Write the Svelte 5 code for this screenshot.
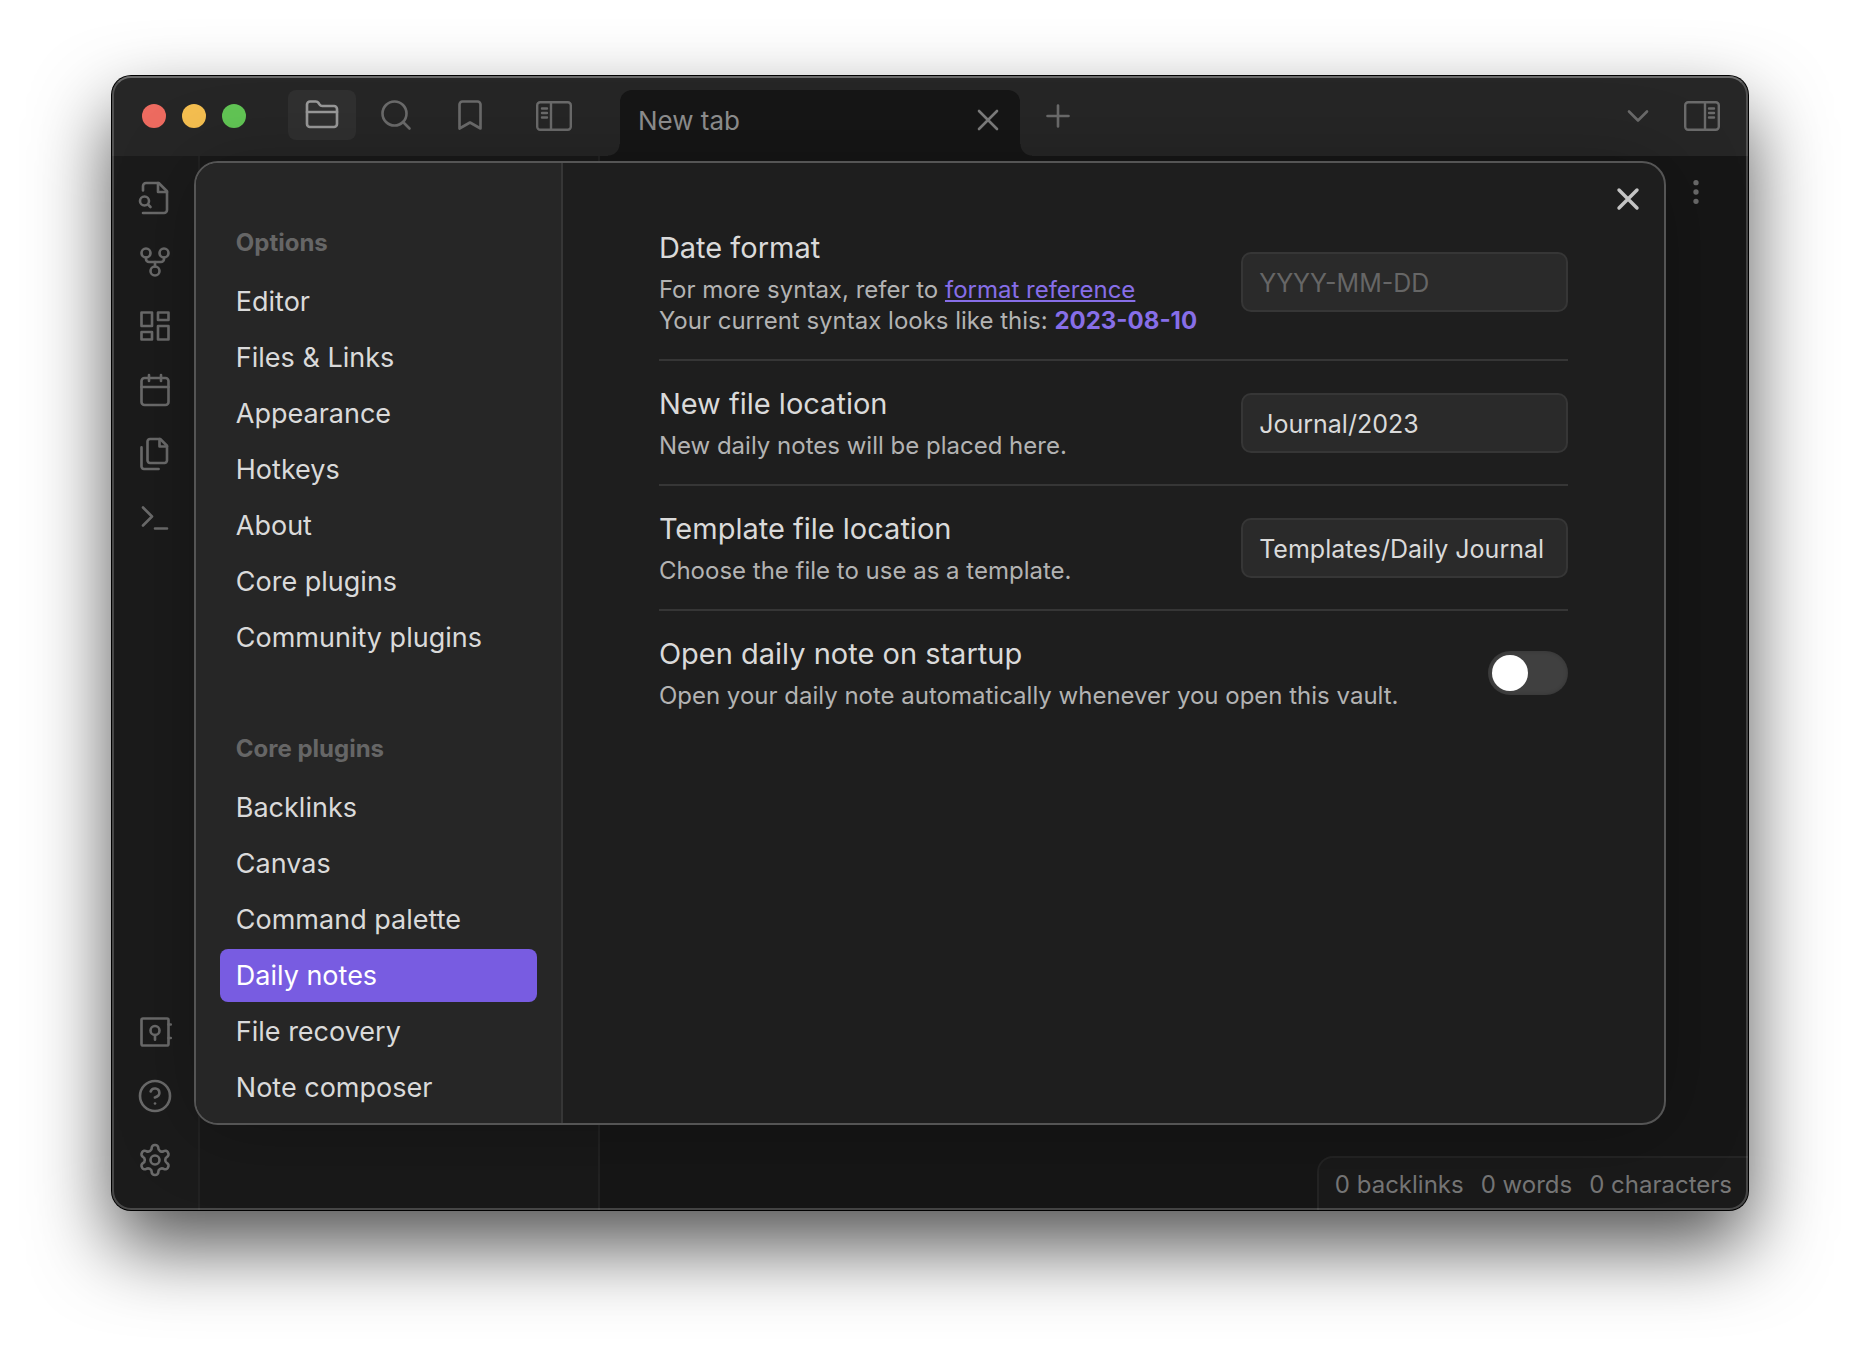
<script>
  // Settings modal on top of the dimmed note app window
  const ICONS = {
    folder: '<path d="M4 20h16a2 2 0 0 0 2-2V8a2 2 0 0 0-2-2h-7.93a2 2 0 0 1-1.66-.9l-.82-1.2A2 2 0 0 0 7.93 3H4a2 2 0 0 0-2 2v13c0 1.1.9 2 2 2Z"/><path d="M2 10h20"/>',
    search: '<circle cx="11" cy="11" r="8"/><path d="m21 21-4.3-4.3"/>',
    bookmark: '<path d="m19 21-7-4-7 4V5a2 2 0 0 1 2-2h10a2 2 0 0 1 2 2v16z"/>',
    switcher: '<path d="M4 22h14a2 2 0 0 0 2-2V7.5L14.5 2H6a2 2 0 0 0-2 2v3"/><path d="M14 2v6h6"/><circle cx="5" cy="14" r="3"/><path d="m9 18-1.5-1.5"/>',
    graph: '<circle cx="12" cy="18" r="3"/><circle cx="6" cy="6" r="3"/><circle cx="18" cy="6" r="3"/><path d="M18 9v1a2 2 0 0 1-2 2H8a2 2 0 0 1-2-2V9"/><path d="M12 12v3"/>',
    canvas: '<path d="M3 3h7v9H3zM14 3h7v5h-7zM14 12h7v9h-7zM3 16h7v5H3z"/>',
    calendar: '<rect x="3" y="4" width="18" height="18" rx="2"/><path d="M16 2v4M8 2v4M3 10h18"/>',
    files: '<path d="M15.5 2H8.6c-.4 0-.8.2-1.1.5-.3.3-.5.7-.5 1.1v12.8c0 .4.2.8.5 1.1.3.3.7.5 1.1.5h9.8c.4 0 .8-.2 1.1-.5.3-.3.5-.7.5-1.1V6.5L15.5 2z"/><path d="M3 7.6v12.8c0 .4.2.8.5 1.1.3.3.7.5 1.1.5h9.8"/><path d="M15 2v5h5"/>',
    terminal: '<path d="m4 17 6-6-6-6M12 19h8"/>',
    vault: '<rect x="3" y="3" width="18" height="18" rx="1"/><circle cx="12" cy="11" r="3"/><path d="M12 14v3.2M21 7h1.5M21 16h1.5"/>',
    help: '<circle cx="12" cy="12" r="10"/><path d="M9.09 9a3 3 0 0 1 5.83 1c0 2-3 3-3 3"/><path d="M12 17h.01"/>',
    gear: '<path d="M12.22 2h-.44a2 2 0 0 0-2 2v.18a2 2 0 0 1-1 1.73l-.43.25a2 2 0 0 1-2 0l-.15-.08a2 2 0 0 0-2.73.73l-.22.38a2 2 0 0 0 .73 2.73l.15.1a2 2 0 0 1 1 1.72v.51a2 2 0 0 1-1 1.74l-.15.09a2 2 0 0 0-.73 2.73l.22.38a2 2 0 0 0 2.73.73l.15-.08a2 2 0 0 1 2 0l.43.25a2 2 0 0 1 1 1.73V20a2 2 0 0 0 2 2h.44a2 2 0 0 0 2-2v-.18a2 2 0 0 1 1-1.73l.43-.25a2 2 0 0 1 2 0l.15.08a2 2 0 0 0 2.73-.73l.22-.39a2 2 0 0 0-.73-2.73l-.15-.08a2 2 0 0 1-1-1.74v-.5a2 2 0 0 1 1-1.74l.15-.09a2 2 0 0 0 .73-2.73l-.22-.38a2 2 0 0 0-2.73-.73l-.15.08a2 2 0 0 1-2 0l-.43-.25a2 2 0 0 1-1-1.73V4a2 2 0 0 0-2-2z"/><circle cx="12" cy="12" r="3"/>',
    cross: '<path d="m6 6 12 12M18 6 6 18"/>',
    plus: '<path d="M12 5v14M5 12h14"/>',
    chevron: '<path d="m6 9 6 6 6-6"/>',
    dots: '<circle cx="12" cy="5" r="1"/><circle cx="12" cy="12" r="1"/><circle cx="12" cy="19" r="1"/>'
  };

  const PANES = [
    { icon: 'folder', label: 'Files' },
    { icon: 'search', label: 'Search' },
    { icon: 'bookmark', label: 'Bookmarks' }
  ];

  const RIBBON_TOP = [
    { icon: 'switcher', label: 'Open quick switcher' },
    { icon: 'graph', label: 'Open graph view' },
    { icon: 'canvas', label: 'Create new canvas' },
    { icon: 'calendar', label: "Open today's daily note" },
    { icon: 'files', label: 'Insert template' },
    { icon: 'terminal', label: 'Open command palette' }
  ];
  const RIBBON_BOTTOM = [
    { icon: 'vault', label: 'Open another vault' },
    { icon: 'help', label: 'Help' },
    { icon: 'gear', label: 'Settings' }
  ];

  const GROUPS = [
    {
      title: 'Options',
      items: ['Editor', 'Files & Links', 'Appearance', 'Hotkeys', 'About', 'Core plugins', 'Community plugins']
    },
    {
      title: 'Core plugins',
      items: ['Backlinks', 'Canvas', 'Command palette', 'Daily notes', 'File recovery', 'Note composer']
    }
  ];

  let pane = $state('folder');
  let active = $state('Daily notes');
  let dateFormat = $state('');
  let folder = $state('Journal/2023');
  let template = $state('Templates/Daily Journal');
  let openOnStartup = $state(false);
</script>

{#snippet icon(name)}
  <svg class="icon" viewBox="0 0 24 24" aria-hidden="true">{@html ICONS[name]}</svg>
{/snippet}

{#snippet ribbonButtons(list)}
  <div class="ribbon-group">
    {#each list as item}
      <button class="icon-btn" aria-label={item.label}>{@render icon(item.icon)}</button>
    {/each}
  </div>
{/snippet}

<div class="desktop">
  <div class="window">
    <header class="titlebar">
      <div class="titlebar-left">
        <div class="lights">
          <span class="light red"></span>
          <span class="light yellow"></span>
          <span class="light green"></span>
        </div>
        <div class="panes">
          {#each PANES as p}
            <button
              class="pane-btn"
              class:active={pane === p.icon}
              aria-label={p.label}
              onclick={() => (pane = p.icon)}
            >{@render icon(p.icon)}</button>
          {/each}
        </div>
        <button class="icon-btn" aria-label="Collapse left sidebar">
          <svg class="panel-icon" viewBox="0 0 36 30" aria-hidden="true">
            <rect x="1.2" y="1.2" width="33.6" height="27.6" rx="3" />
            <path d="M15 1v28M6 7.5h5M6 12h5M6 16.5h5" />
          </svg>
        </button>
      </div>

      <div class="tab">
        <span>New tab</span>
        <button class="icon-btn tab-close" aria-label="Close tab">{@render icon('cross')}</button>
      </div>
      <button class="icon-btn" aria-label="Open new tab">{@render icon('plus')}</button>

      <div class="titlebar-right">
        <button class="icon-btn" aria-label="Tab list">{@render icon('chevron')}</button>
        <button class="icon-btn" aria-label="Expand right sidebar">
          <svg class="panel-icon" viewBox="0 0 36 30" aria-hidden="true">
            <rect x="1.2" y="1.2" width="33.6" height="27.6" rx="3" />
            <path d="M21 1v28M25 7.5h5M25 12h5M25 16.5h5" />
          </svg>
        </button>
      </div>
    </header>

    <div class="workspace">
      <nav class="ribbon">
        {@render ribbonButtons(RIBBON_TOP)}
        {@render ribbonButtons(RIBBON_BOTTOM)}
      </nav>
      <aside class="explorer"></aside>
      <main class="leaf">
        <button class="icon-btn more" aria-label="More options">{@render icon('dots')}</button>
        <footer class="status">
          <span>0 backlinks</span>
          <span>0 words</span>
          <span>0 characters</span>
        </footer>
      </main>
    </div>

    <div class="modal-container">
      <div class="modal" role="dialog" aria-modal="true" aria-label="Settings">
        <nav class="modal-nav">
          {#each GROUPS as group}
            <section class="nav-group">
              <h2>{group.title}</h2>
              {#each group.items as item}
                <button
                  class="nav-item"
                  class:active={active === item}
                  onclick={() => (active = item)}
                >{item}</button>
              {/each}
            </section>
          {/each}
        </nav>

        <div class="modal-content">
          <div class="setting">
            <div class="info">
              <label class="name" for="date-format">Date format</label>
              <div class="desc">
                For more syntax, refer to <a href="#format">format reference</a><br />
                Your current syntax looks like this: <b>2023-08-10</b>
              </div>
            </div>
            <input id="date-format" class="text" type="text" placeholder="YYYY-MM-DD" bind:value={dateFormat} />
          </div>

          <div class="setting">
            <div class="info">
              <label class="name" for="folder">New file location</label>
              <div class="desc">New daily notes will be placed here.</div>
            </div>
            <input id="folder" class="text" type="text" spellcheck="false" bind:value={folder} />
          </div>

          <div class="setting">
            <div class="info">
              <label class="name" for="template">Template file location</label>
              <div class="desc">Choose the file to use as a template.</div>
            </div>
            <input id="template" class="text" type="text" spellcheck="false" bind:value={template} />
          </div>

          <div class="setting">
            <div class="info">
              <label class="name" for="startup">Open daily note on startup</label>
              <div class="desc">Open your daily note automatically whenever you open this vault.</div>
            </div>
            <input id="startup" class="toggle" type="checkbox" bind:checked={openOnStartup} />
          </div>
        </div>

        <button class="icon-btn modal-close" aria-label="Close">{@render icon('cross')}</button>
      </div>
    </div>
  </div>
</div>

<style>
  :global(body) {
    margin: 0;
    background: #fff;
  }
  .desktop {
    box-sizing: border-box;
    display: flex;
    min-height: 100vh;
    padding: 76px 112px 148px;
    overflow: hidden;
    font-family: Inter, 'Liberation Sans', sans-serif;
    font-size: 27px;
    color: #dadada;
  }
  button,
  input {
    font: inherit;
    color: inherit;
  }
  button {
    padding: 0;
    border: 0;
    background: none;
    cursor: pointer;
  }

  .window {
    position: relative;
    flex: 1;
    display: flex;
    flex-direction: column;
    border-radius: 19px;
    background: #161616;
    box-shadow:
      0 0 0 1px #000,
      0 36px 78px rgba(0, 0, 0, 0.68);
  }
  /* light rim around the window, brighter on top */
  .window::after {
    content: '';
    position: absolute;
    inset: 0;
    border: 2px solid rgba(255, 255, 255, 0.2);
    border-top-color: rgba(255, 255, 255, 0.32);
    border-radius: 19px;
    pointer-events: none;
  }

  .icon {
    display: block;
    width: 36px;
    height: 36px;
    fill: none;
    stroke: currentColor;
    stroke-width: 1.75;
    stroke-linecap: round;
    stroke-linejoin: round;
  }
  .panel-icon {
    display: block;
    width: 36px;
    height: 30px;
    fill: none;
    stroke: currentColor;
    stroke-width: 2.4;
    stroke-linecap: round;
  }
  .icon-btn {
    flex: none;
    display: flex;
    align-items: center;
    justify-content: center;
    width: 36px;
    height: 36px;
    color: #6b6b6b;
  }

  /* title bar */
  .titlebar {
    display: flex;
    align-items: center;
    height: 80px;
    border-radius: 19px 19px 0 0;
    background: #262626;
  }
  .titlebar-left {
    box-sizing: border-box;
    flex: none;
    display: flex;
    align-items: center;
    justify-content: space-between;
    width: 508px;
    padding: 0 48px 0 30px;
  }
  .lights {
    display: flex;
    gap: 16px;
  }
  .light {
    width: 24px;
    height: 24px;
    border-radius: 50%;
  }
  .red {
    background: #ed6b60;
  }
  .yellow {
    background: #f5bf50;
  }
  .green {
    background: #62c655;
  }
  .panes {
    display: flex;
    gap: 6px;
    margin-left: 10px;
    padding-bottom: 2px;
  }
  .pane-btn {
    display: flex;
    align-items: center;
    justify-content: center;
    width: 68px;
    height: 50px;
    border-radius: 8px;
    color: #6b6b6b;
  }
  .pane-btn.active {
    background: #303030;
    color: #999;
  }
  .tab {
    position: relative;
    box-sizing: border-box;
    display: flex;
    align-items: center;
    justify-content: space-between;
    align-self: flex-end;
    width: 400px;
    height: 66px;
    margin-right: 20px;
    padding: 0 14px 6px 18px;
    border-radius: 12px 12px 0 0;
    background: #161616;
    font-size: 26px;
    color: #8f8f8f;
  }
  .tab::before,
  .tab::after {
    content: '';
    position: absolute;
    bottom: 0;
    width: 12px;
    height: 12px;
  }
  .tab::before {
    right: 100%;
    background: radial-gradient(circle at 0 0, transparent 11px, #161616 12px);
  }
  .tab::after {
    left: 100%;
    background: radial-gradient(circle at 100% 0, transparent 11px, #161616 12px);
  }
  .tab-close {
    color: #7d7d7d;
  }
  .titlebar-right {
    display: flex;
    gap: 28px;
    margin-left: auto;
    padding-right: 28px;
  }

  /* workspace behind the modal */
  .workspace {
    flex: 1;
    display: flex;
  }
  .ribbon {
    box-sizing: border-box;
    flex: none;
    display: flex;
    flex-direction: column;
    justify-content: space-between;
    align-items: center;
    width: 88px;
    padding: 24px 0 32px;
    border-right: 2px solid #222;
    border-radius: 0 0 0 19px;
    background: #1b1b1b;
  }
  .ribbon-group {
    display: flex;
    flex-direction: column;
    gap: 28px;
  }
  .explorer {
    box-sizing: border-box;
    flex: none;
    width: 400px;
    border-right: 2px solid #222;
    background: #191919;
  }
  .leaf {
    flex: 1;
    display: flex;
    flex-direction: column;
    justify-content: space-between;
    align-items: flex-end;
  }
  .more {
    margin: 18px 34px;
  }
  .more .icon {
    height: 32px;
    stroke-width: 2;
  }
  .status {
    box-sizing: border-box;
    display: flex;
    align-items: center;
    gap: 17px;
    height: 54px;
    padding: 0 16px;
    border: solid #242424;
    border-width: 2px 0 0 2px;
    border-radius: 16px 0 19px 0;
    background: #1a1a1a;
    font-size: 24px;
    color: #777;
  }

  /* modal */
  .modal-container {
    position: absolute;
    inset: 0;
    display: flex;
    align-items: center;
    justify-content: center;
  }
  .modal {
    position: relative;
    box-sizing: border-box;
    display: flex;
    width: 90%;
    height: 85%;
    border: 2px solid #555;
    border-radius: 24px;
    background: #1e1e1e;
    box-shadow: 0 4px 80px rgba(0, 0, 0, 0.25);
    overflow: hidden;
  }
  .modal-nav {
    box-sizing: border-box;
    flex: none;
    display: flex;
    flex-direction: column;
    gap: 70px;
    width: 25%;
    padding: 65px 24px 0;
    border-right: 2px solid #363636;
    background: #262626;
    overflow: hidden;
  }
  .nav-group {
    display: flex;
    flex-direction: column;
    gap: 3px;
  }
  h2 {
    margin: 0 0 14px;
    padding: 0 16px;
    font-size: 24px;
    font-weight: 700;
    line-height: 30px;
    color: #666;
  }
  .nav-item {
    padding: 0 16px;
    border-radius: 8px;
    line-height: 53px;
    text-align: left;
  }
  .nav-item.active {
    background: #785ce1;
    color: #fff;
  }

  .modal-content {
    flex: 1;
    padding: 65px 96px;
  }
  .setting {
    display: flex;
    align-items: center;
    justify-content: space-between;
    gap: 18px;
    padding: 23px 0;
    border-top: 2px solid #363636;
  }
  .setting:first-child {
    padding-top: 0;
    border-top: 0;
  }
  .info {
    padding-top: 2px;
  }
  .name {
    display: block;
    margin-bottom: 8px;
    font-size: 29px;
    line-height: 36px;
  }
  .desc {
    font-size: 24px;
    line-height: 31px;
    color: #b3b3b3;
  }
  a,
  b {
    color: #876ee8;
  }
  b {
    font-weight: 700;
  }
  .text {
    box-sizing: border-box;
    flex: none;
    width: 327px;
    height: 60px;
    padding: 2px 16px 0;
    border: 2px solid #363636;
    border-radius: 10px;
    background: #2a2a2a;
    font-size: 25px;
    outline: none;
  }
  .text::placeholder {
    color: #666;
    opacity: 1;
  }
  .toggle {
    appearance: none;
    box-sizing: border-box;
    flex: none;
    width: 80px;
    height: 44px;
    margin: 0;
    padding: 4px;
    border-radius: 22px;
    background: #404040;
    box-shadow: inset 0 0 4px rgba(0, 0, 0, 0.2);
    cursor: pointer;
  }
  .toggle::before {
    content: '';
    display: block;
    width: 36px;
    height: 36px;
    border-radius: 50%;
    background: #fff;
  }
  .toggle:checked {
    background: #785ce1;
  }
  .toggle:checked::before {
    margin-left: auto;
  }
  .modal-close {
    position: absolute;
    top: 18px;
    right: 18px;
    color: #c4c4c4;
  }
  .modal-close .icon {
    stroke-width: 2.3;
  }
</style>
